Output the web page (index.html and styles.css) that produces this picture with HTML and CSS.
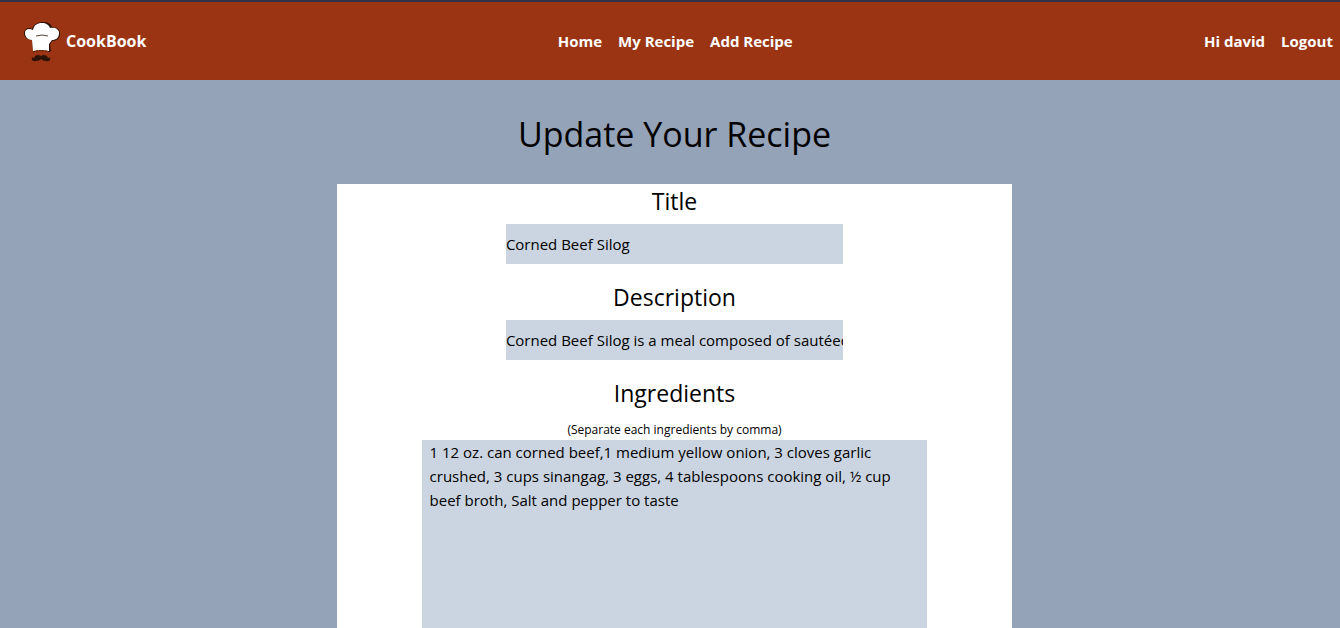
FILE: index.html
```html
<!DOCTYPE html>
<html lang="en">
<head>
<meta charset="utf-8">
<meta name="viewport" content="width=device-width, initial-scale=1">
<title>CookBook</title>
<link rel="stylesheet" href="styles.css">
</head>
<body>
<div class="page">
  <header class="navbar">
    <a class="brand" href="#">
      <svg class="brand-logo" viewBox="0 -4 36 46" aria-hidden="true">
        <path class="hat-shade" d="M9 28 8 18C3 18 0 15 0 11 1 6 5 5 8 7 10 2 14 0 19 0c5 0 8 2 9 5 5 0 8 2 8 7 0 4-3 7-8 7l-2 4 1 6-2 1-1-2Z"/>
        <path class="hat" d="M9 29 8 18C4 18 1 15 1 11 1 7 5 6 9 8 10 3 13 1 18 1c4 0 7 2 8 5 5-1 9 1 9 5 0 5-3 7-7 7l-3 4 0 7Q17 27 9 29Z"/>
        <path class="fold" d="M12 14q6-2 12 0"/>
        <path class="band" d="M9 30q8-3 17 0"/>
        <path class="mustache" d="M17 34c-3-2-6-1-7 2-1 0-1 0-2-1-1 3 1 5 4 4 2 0 4-1 5-2 1 1 3 2 5 2 3 1 5-1 4-4-1 1-1 1-2 1-1-3-4-4-7-2Z"/>
      </svg>
      <span>CookBook</span>
    </a>
    <nav class="links">
      <a href="#">Home</a>
      <a href="#">My Recipe</a>
      <a href="#">Add Recipe</a>
    </nav>
    <div class="links">
      <a href="#">Hi david</a>
      <a href="#">Logout</a>
    </div>
  </header>
  <main class="content">
    <h1 class="heading">Update Your Recipe</h1>
    <form class="card">
      <label class="label" for="title">Title</label>
      <input class="field" id="title" type="text" value="Corned Beef Silog">
      <label class="label" for="description">Description</label>
      <input class="field" id="description" type="text" value="Corned Beef Silog is a meal composed of sautéed corned beef">
      <label class="label" for="ingredients">Ingredients</label>
      <small class="hint">(Separate each ingredients by comma)</small>
      <textarea class="area" id="ingredients" rows="10">1 12 oz. can corned beef,1 medium yellow onion, 3 cloves garlic crushed, 3 cups sinangag, 3 eggs, 4 tablespoons cooking oil, ½ cup beef broth, Salt and pepper to taste</textarea>
    </form>
  </main>
</div>
</body>
</html>
```
FILE: styles.css
```css
* {
  box-sizing: border-box;
}

body {
  margin: 0;
  overflow-x: hidden;
  background: #94a3b8;
  color: #000;
  font-family: "Segoe UI", "Open Sans", "Noto Sans", sans-serif;
  font-size: 15px;
  line-height: 24px;
  scrollbar-width: none;
}

.page {
  width: calc(100% + 9px);
}

.navbar {
  display: flex;
  justify-content: space-between;
  align-items: center;
  padding: 16px 16px 16px 24px;
  border-top: 2px solid #33304a;
  background: #9a3412;
  color: #fff;
  font-weight: 700;
}

.brand {
  display: flex;
  align-items: center;
  gap: 6px;
  color: inherit;
  font-size: 16px;
  text-decoration: none;
}

.brand-logo {
  width: 36px;
  height: 46px;
}

.hat {
  fill: #fff;
}

.hat-shade,
.mustache {
  fill: #2b1204;
}

.fold,
.band {
  fill: none;
  stroke: #2b1204;
  stroke-width: 0.8;
}

.band {
  stroke-dasharray: 2 1;
}

.links {
  display: flex;
  gap: 16px;
}

.links a {
  color: inherit;
  text-decoration: none;
}

.content {
  display: flex;
  flex-direction: column;
  align-items: center;
}

.heading {
  margin: 0;
  padding: 34px 0 30px;
  font-size: 34px;
  font-weight: 400;
  line-height: 40px;
}

.card {
  display: flex;
  flex-direction: column;
  align-items: center;
  width: 50%;
  padding-bottom: 32px;
  background: #fff;
}

.label {
  margin-bottom: 6px;
  font-size: 23px;
  line-height: 34px;
}

.field,
.area {
  border: 0;
  border-radius: 0;
  outline: 0;
  background: #cbd5e1;
  color: inherit;
  font: inherit;
}

.field {
  width: 50%;
  height: 40px;
  margin-bottom: 16px;
  padding: 0;
}

.hint {
  margin-top: 4px;
  font-size: 12px;
  line-height: 20px;
}

.area {
  width: 75%;
  padding: 0 8px;
  resize: none;
}
```
